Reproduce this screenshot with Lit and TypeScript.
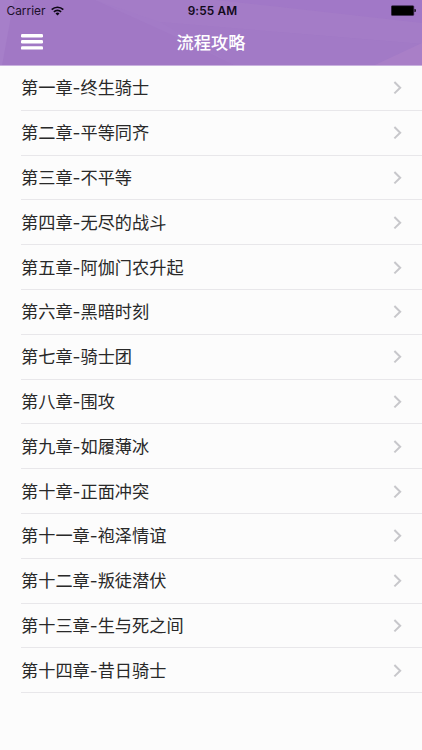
import { LitElement, html, css } from "lit";
import { customElement, property } from "lit/decorators.js";

const CHAPTERS: string[] = [
  "第一章-终生骑士",
  "第二章-平等同齐",
  "第三章-不平等",
  "第四章-无尽的战斗",
  "第五章-阿伽门农升起",
  "第六章-黑暗时刻",
  "第七章-骑士团",
  "第八章-围攻",
  "第九章-如履薄冰",
  "第十章-正面冲突",
  "第十一章-袍泽情谊",
  "第十二章-叛徒潜伏",
  "第十三章-生与死之间",
  "第十四章-昔日骑士",
];

@customElement("status-bar")
class StatusBar extends LitElement {
  static styles = css`
    :host {
      display: grid;
      grid-template-columns: 1fr auto 1fr;
      align-items: center;
      height: 22px;
      padding: 0 6px 0 6.5px;
      font: 400 11.9px/22px Inter, "Liberation Sans", sans-serif;
      color: #1d102b;
    }
    .left {
      display: flex;
      align-items: center;
      gap: 5.5px;
    }
    .time {
      padding-left: 2.5px;
      font-weight: 600;
      font-size: 11.8px;
      letter-spacing: 0.15px;
      color: #120a1b;
    }
    .battery {
      justify-self: end;
    }
    svg {
      display: block;
    }
  `;

  render() {
    return html`
      <div class="left">
        <span>Carrier</span>
        <svg width="13" height="10" viewBox="0 0 13 10" fill="none" stroke="#0d0714" stroke-width="1.7">
          <path d="M0.7 3.7C4 .4 9 .4 12.3 3.7" />
          <path d="M2.9 5.9C5 3.8 8 3.8 10.1 5.9" />
          <path d="M6.5 9.5L4.5 7.4Q6.5 5.8 8.5 7.4Z" fill="#0d0714" stroke="none" />
        </svg>
      </div>
      <span class="time">9:55 AM</span>
      <svg class="battery" width="25" height="12" viewBox="0 0 25 12">
        <rect x="0.3" y="0.7" width="22.5" height="9.8" rx="1" fill="#000" stroke="#38264b" stroke-width=".6" />
        <path d="M23.5 4h.4q.9 0 .9.8v1.5q0 .8-.9.8h-.4z" fill="#000" />
      </svg>
    `;
  }
}

@customElement("nav-bar")
class NavBar extends LitElement {
  @property() heading = "";

  static styles = css`
    :host {
      display: grid;
      grid-template-columns: 1fr auto 1fr;
      align-items: center;
      height: 44px;
      padding: 0 21px;
    }
    svg {
      display: block;
      margin-top: -4px;
    }
    .title {
      margin-top: -4px;
      font: 500 17.2px/26px "Noto Sans CJK SC", sans-serif;
      color: #fff;
    }
  `;

  render() {
    return html`
      <svg width="22" height="18" viewBox="0 0 22 18" fill="#fff">
        <rect y="1" width="22" height="3.4" rx="1.2" />
        <rect y="7.1" width="22" height="3.4" rx="1.2" />
        <rect y="13.2" width="22" height="3.4" rx="1.2" />
      </svg>
      <div class="title">${this.heading}</div>
    `;
  }
}

@customElement("chapter-row")
class ChapterRow extends LitElement {
  @property() label = "";

  static styles = css`
    :host {
      display: flex;
      align-items: center;
      justify-content: space-between;
      box-sizing: border-box;
      height: 44.8px;
      margin-left: 21px;
      padding: 1px 20px 0 0;
      border-bottom: 1px solid #e8e7ea;
      font: 400 17.2px/26px Inter, "Noto Sans CJK SC", sans-serif;
      color: #292929;
    }
    svg {
      display: block;
    }
  `;

  render() {
    return html`
      <span>${this.label}</span>
      <svg width="9" height="14" viewBox="0 0 9 14" fill="none" stroke="#c7c7cb" stroke-width="2">
        <path d="M1.4 1L7.2 6.7L1.4 12.4" />
      </svg>
    `;
  }
}

@customElement("app-root")
class AppRoot extends LitElement {
  static styles = css`
    :host {
      display: block;
      height: 750px;
      overflow: hidden;
      background: #fcfcfc;
    }
    .header {
      position: relative;
      height: 66px;
      background: linear-gradient(#a178c6 65px, #c9b2de 65px);
    }
    .facets {
      position: absolute;
      inset: 0;
      width: 100%;
      height: 65.4px;
    }
    status-bar,
    nav-bar {
      position: relative;
    }
  `;

  render() {
    return html`
      <div class="header">
        <svg class="facets" viewBox="0 0 422 65.4" preserveAspectRatio="none">
          <rect width="422" height="65.4" fill="#a178c5" />
          <path d="M0 0H14L2 65.4H0Z" fill="#a67fc9" />
          <path d="M95 0H280V55L235 65.4L170 34Z" fill="#a37bc7" />
          <path d="M215 0H422V23L280 7Z" fill="#a178c7" />
          <path d="M215 0L280 7L422 23V44L160 22L95 0Z" fill="#a47cc7" />
          <path d="M160 22L422 44L374 65.4H235Z" fill="#a27ac6" />
          <path d="M374 65.4L422 43V65.4Z" fill="#a97fc7" />
        </svg>
        <status-bar></status-bar>
        <nav-bar heading="流程攻略"></nav-bar>
      </div>
      ${CHAPTERS.map((c) => html`<chapter-row .label=${c}></chapter-row>`)}
    `;
  }
}
